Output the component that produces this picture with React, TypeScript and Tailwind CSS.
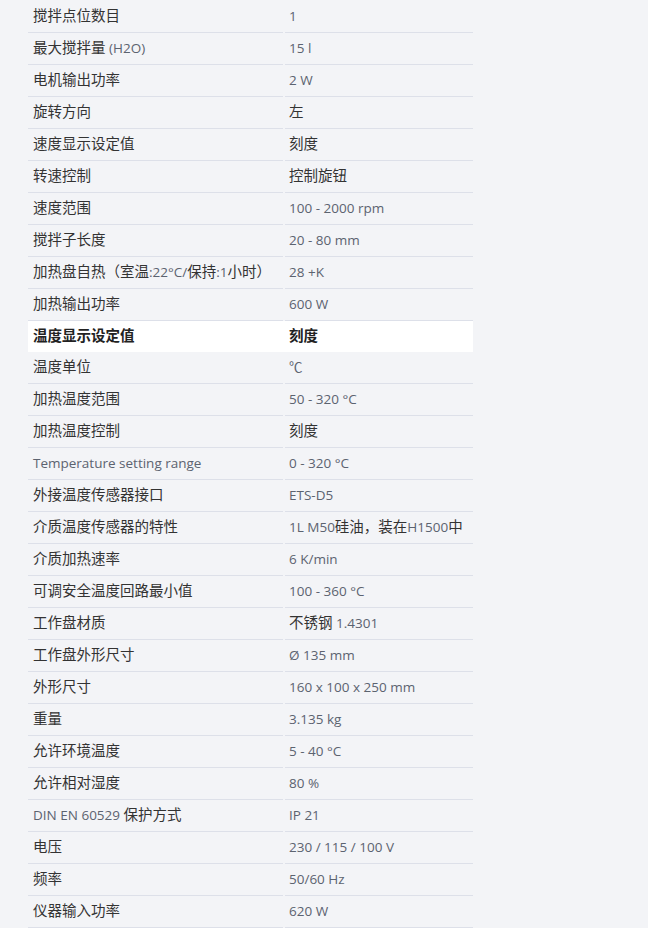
import React from "react";

const rows: [string, string][] = [
  ["搅拌点位数目", "1"],
  ["最大搅拌量 (H2O)", "15 l"],
  ["电机输出功率", "2 W"],
  ["旋转方向", "左"],
  ["速度显示设定值", "刻度"],
  ["转速控制", "控制旋钮"],
  ["速度范围", "100 - 2000 rpm"],
  ["搅拌子长度", "20 - 80 mm"],
  ["加热盘自热（室温:22°C/保持:1小时）", "28 +K"],
  ["加热输出功率", "600 W"],
  ["温度显示设定值", "刻度"],
  ["温度单位", "℃"],
  ["加热温度范围", "50 - 320 °C"],
  ["加热温度控制", "刻度"],
  ["Temperature setting range", "0 - 320 °C"],
  ["外接温度传感器接口", "ETS-D5"],
  ["介质温度传感器的特性", "1L M50硅油，装在H1500中"],
  ["介质加热速率", "6 K/min"],
  ["可调安全温度回路最小值", "100 - 360 °C"],
  ["工作盘材质", "不锈钢 1.4301"],
  ["工作盘外形尺寸", "Ø 135 mm"],
  ["外形尺寸", "160 x 100 x 250 mm"],
  ["重量", "3.135 kg"],
  ["允许环境温度", "5 - 40 °C"],
  ["允许相对湿度", "80 %"],
  ["DIN EN 60529 保护方式", "IP 21"],
  ["电压", "230 / 115 / 100 V"],
  ["频率", "50/60 Hz"],
  ["仪器输入功率", "620 W"],
];

function isCjk(ch: string) {
  return /[\u3000-\u9fff\uff00-\uffef（）：，]/.test(ch);
}

function Mixed({ text, bold }: { text: string; bold?: boolean }) {
  const parts: { t: string; c: boolean }[] = [];
  for (const ch of text) {
    const c = isCjk(ch);
    const last = parts[parts.length - 1];
    if (last && last.c === c) last.t += ch;
    else parts.push({ t: ch, c });
  }
  return (
    <span className="block whitespace-nowrap text-[14.5px] leading-[20px]">
      {parts.map((p, i) =>
        p.c ? (
          <span
            key={i}
            className={
              "text-[14.5px] leading-[20px] " +
              (bold ? "text-[#222] font-bold" : "text-[#333]")
            }
          >
            {p.t}
          </span>
        ) : (
          <span
            key={i}
            className={
              "text-[13.5px] leading-[20px] " +
              (bold ? "text-[#222] font-bold" : "text-[#5c6370]")
            }
          >
            {p.t}
          </span>
        )
      )}
    </span>
  );
}

export default function App() {
  return (
    <div
      className="w-[648px] h-[928px] bg-[#f3f4f7] overflow-hidden pt-px"
      style={{ fontFamily: '"Open Sans", "Noto Sans CJK SC", sans-serif' }}
    >
      <div className="ml-[28px] w-[445px] flex flex-col">
        {rows.map(([k, v], i) => {
          const hl = i === 10;
          const cell = hl
            ? "h-[31px] flex items-center pb-[2px]"
            : "h-8 flex items-center pb-[2px] border-b border-[#dde0e9]";
          return (
            <div
              key={i}
              className={
                "grid grid-cols-[255px_188px] gap-x-[2px] " + (hl ? "bg-white" : "")
              }
            >
              <div className={cell + " pl-[5px]"}>
                <Mixed text={k} bold={hl} />
              </div>
              <div className={cell + " pl-[4px]"}>
                <Mixed text={v} bold={hl} />
              </div>
            </div>
          );
        })}
      </div>
    </div>
  );
}
